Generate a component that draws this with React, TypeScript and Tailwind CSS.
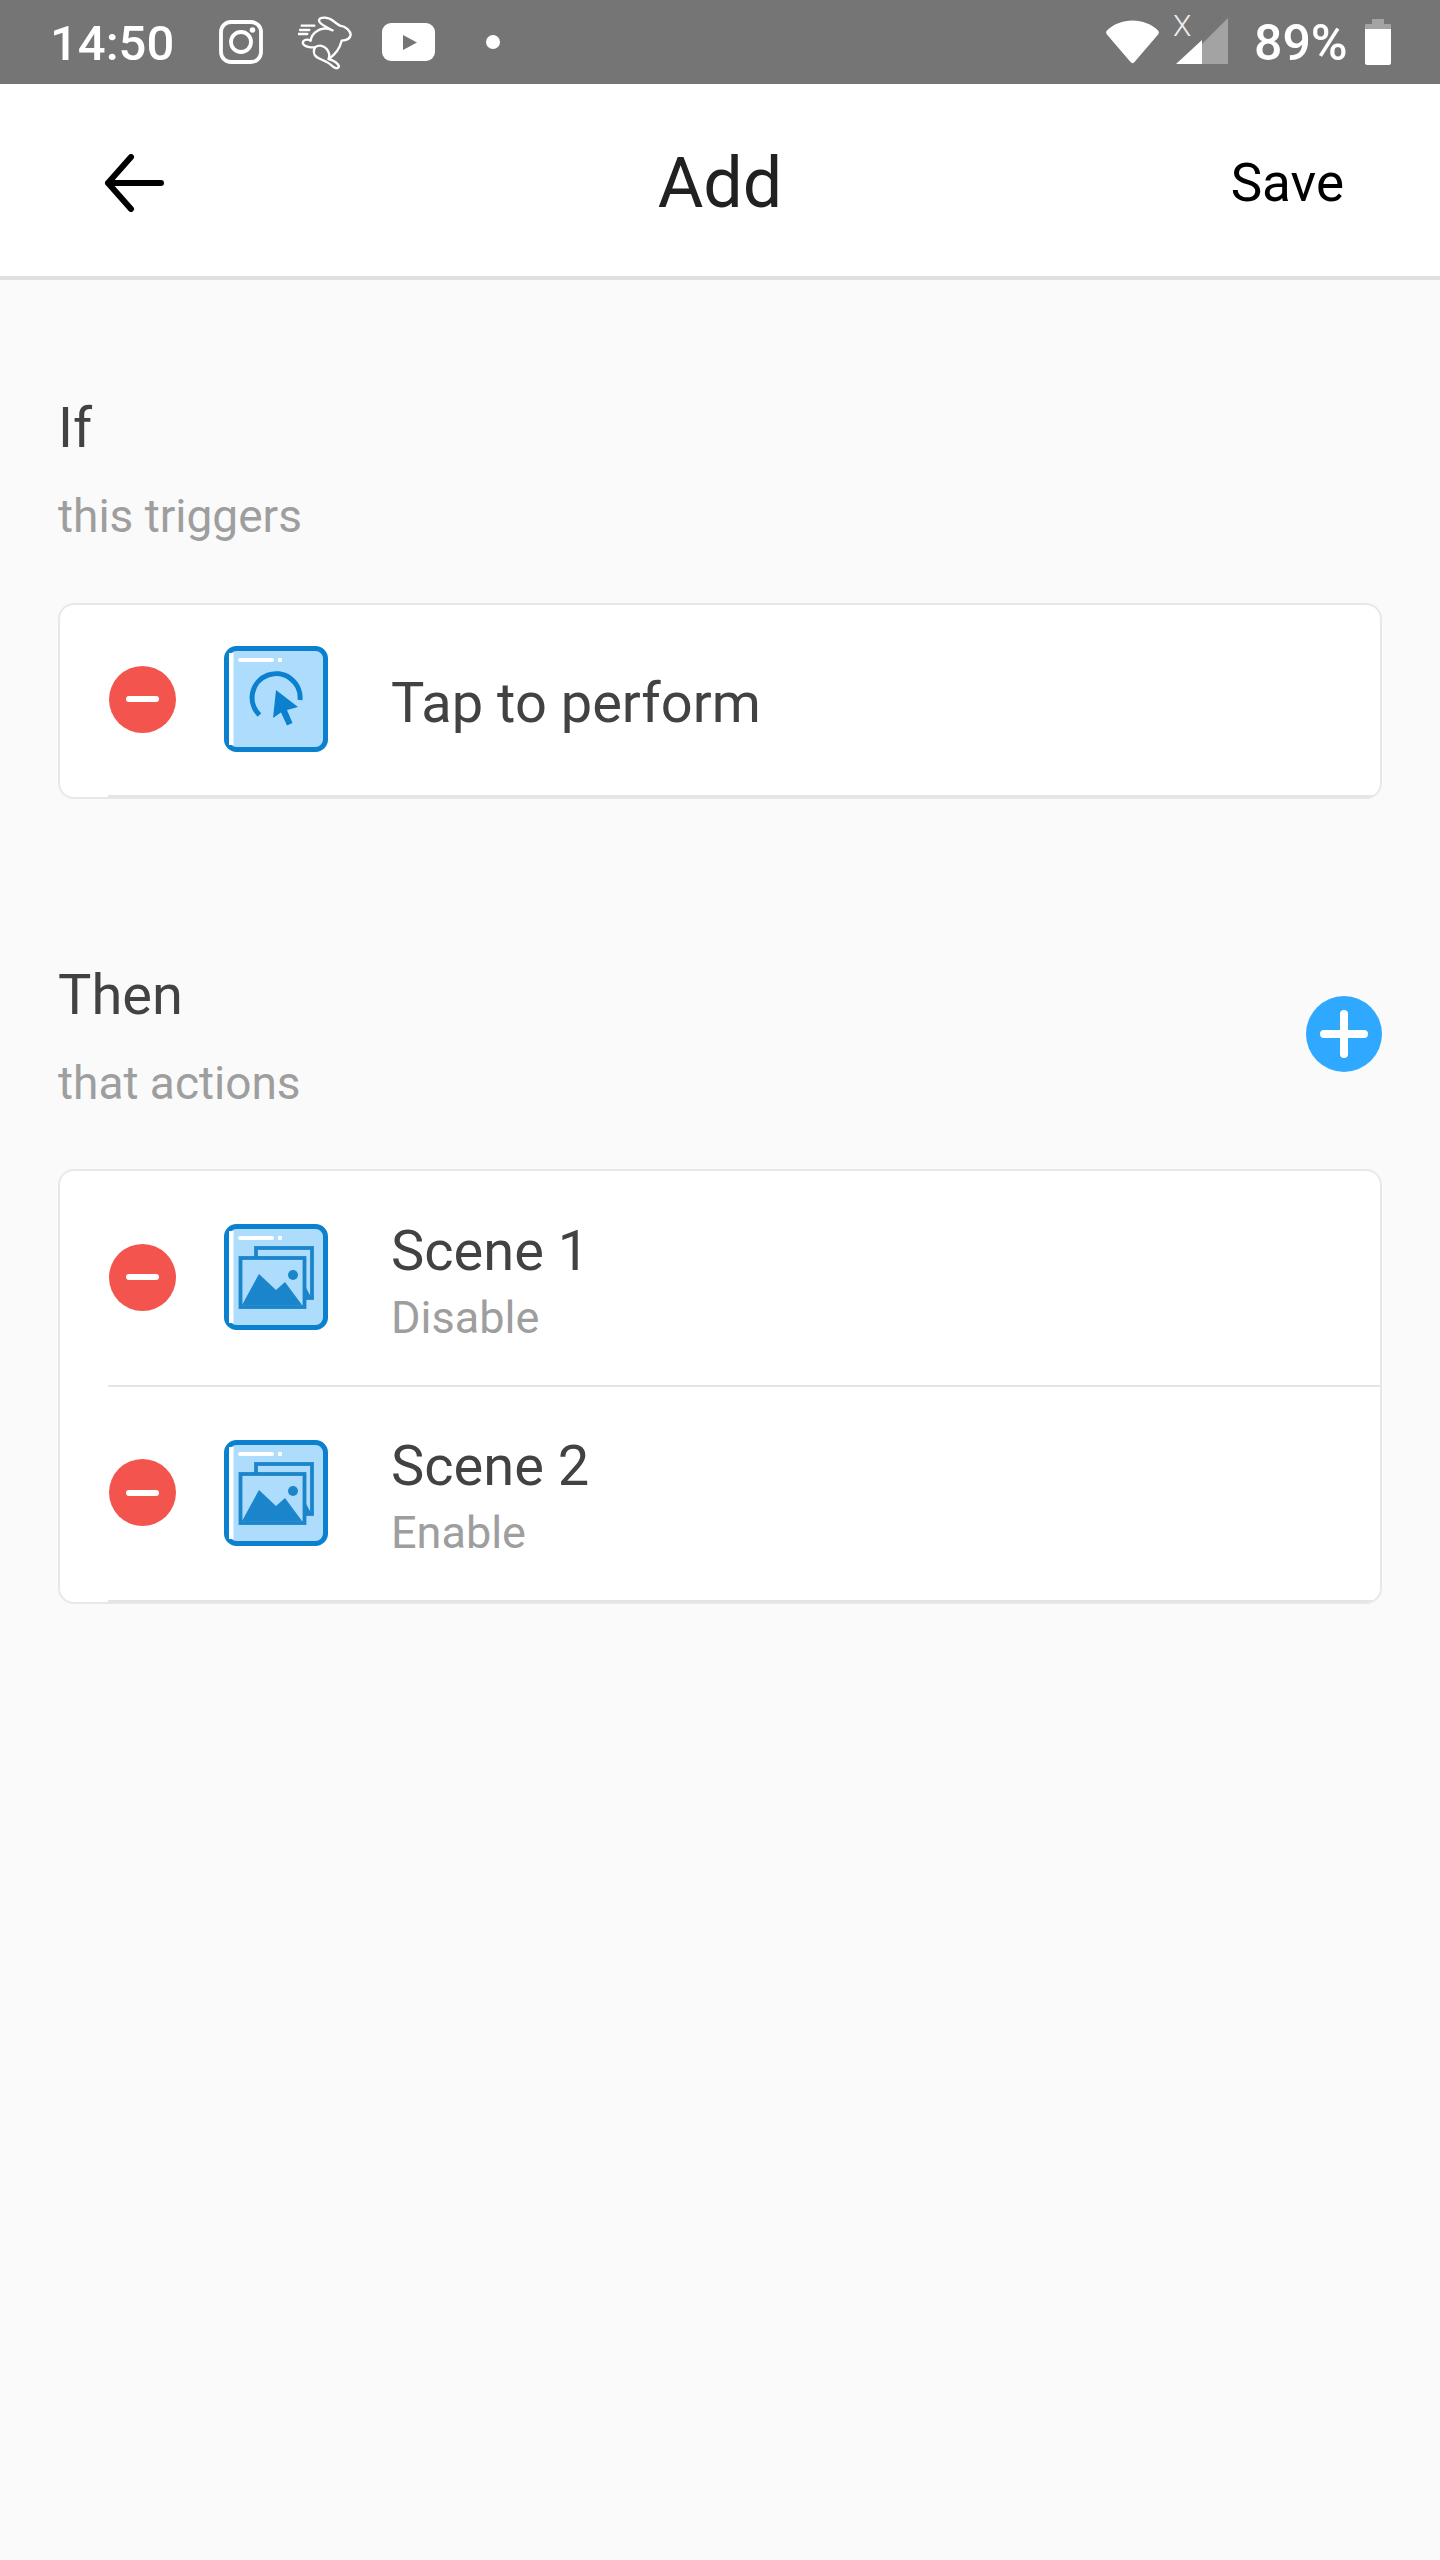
const CardIcon = ({ children }: { children: React.ReactNode }) => (
  <svg className="w-[104px] h-[106px] shrink-0" viewBox="0 0 104 106" fill="none">
    <rect x="2.5" y="2.5" width="99" height="101" rx="10" fill="#aedcfd" stroke="#0a80cf" strokeWidth="5" />
    <rect x="5" y="7" width="4.5" height="92" fill="#fff" />
    <rect x="14" y="12" width="36" height="4" rx="2" fill="#fff" />
    <rect x="54" y="12" width="4" height="4" rx="1" fill="#fff" />
    {children}
  </svg>
);

const TapGlyph = () => (
  <>
    <path d="M35.5 69A24 24 0 1 1 76 54" stroke="#0a80cf" strokeWidth="5" />
    <path d="M52 44L74 61L63 64L68.5 77L63 79.5L57 66.5L49 72Z" fill="#0a80cf" />
  </>
);

const ImagesGlyph = () => (
  <>
    <rect x="32" y="24" width="56" height="50" stroke="#1a85cb" strokeWidth="3.8" />
    <path d="M80 60L87 73H80Z" fill="#1a85cb" />
    <rect x="16.5" y="34" width="64" height="49" fill="#aedcfd" stroke="#1a85cb" strokeWidth="3.8" />
    <path d="M18 81L35 50L52 66L61 58L78 81Z" fill="#1a85cb" strokeLinejoin="round" />
    <circle cx="69" cy="51" r="5" fill="#1a85cb" />
  </>
);

const Row = ({ icon, title, sub, height }: { icon: React.ReactNode; title: string; sub?: string; height: string }) => (
  <div className={`ml-[48px] pl-[1px] pb-[2px] flex items-center border-b-2 border-[#e4e4e4] ${height}`}>
    <div className="w-[67px] h-[67px] rounded-full bg-[#f4544e] flex items-center justify-center shrink-0">
      <div className="w-[33px] h-[6px] rounded-full bg-white" />
    </div>
    <div className="ml-[48px]">
      <CardIcon>{icon}</CardIcon>
    </div>
    <div className="ml-[63px] pt-[8px]">
      <div className="text-[56px] leading-[64px] text-[#424242]">{title}</div>
      {sub && <div className="text-[45px] leading-[52px] text-[#9e9e9e] mt-[9px]">{sub}</div>}
    </div>
  </div>
);

export default function App() {
  return (
    <div className="w-[1440px] h-[2560px] bg-[#fafafa] font-['Roboto',sans-serif] overflow-hidden">
      <div className="h-[84px] bg-[#757575] flex items-center pl-[50px] text-white">
        <span className="text-[49px] leading-none font-medium w-[169px] mt-[2px]">14:50</span>
        <svg className="w-[44px] h-[44px] shrink-0" viewBox="0 0 44 44" fill="none" stroke="#fff">
          <rect x="2" y="2" width="40" height="40" rx="10" strokeWidth="3.8" />
          <circle cx="22" cy="22" r="10" strokeWidth="3.8" />
          <circle cx="33.5" cy="10" r="2.8" fill="#fff" stroke="none" />
        </svg>
        <svg className="w-[54px] h-[55px] shrink-0 ml-[35px]" viewBox="294 40 162 165" fill="none" stroke="#fff" strokeWidth="7" strokeLinecap="round" strokeLinejoin="round">
          <path d="M305 72H343M300 85H328M295 97H322" />
          <path d="M398 86C382 78 358 68 357 57C358 45 384 45 400 58C408 64 414 69 420 72C438 74 452 88 452 100C450 112 438 116 425 117C420 138 406 158 386 172C402 176 416 186 417 195C414 203 402 200 394 191C382 178 364 176 350 166C340 158 340 146 345 137C334 138 314 136 309 126C306 116 320 110 332 117C334 98 352 82 374 80C382 80 390 82 398 86Z" />
          <path d="M345 137C358 128 372 132 380 142C388 152 390 162 386 172" />
        </svg>
        <svg className="w-[53px] h-[38px] shrink-0 ml-[30px]" viewBox="0 0 53 38">
          <rect width="53" height="38" rx="9" fill="#fff" />
          <path d="M21 12V27L35 19.5Z" fill="#757575" />
        </svg>
        <div className="w-[14px] h-[14px] rounded-full bg-white ml-[51px] shrink-0" />
        <svg className="w-[53px] h-[44px] shrink-0 ml-[606px]" viewBox="0 0 53 44">
          <path d="M0.5 11C7 4 17 0.5 26.5 0.5C36 0.5 46 4 52.5 11C53 12 53 13 52.5 14L28.5 42C27.5 43.5 25.5 43.5 24.5 42L0.5 14C0 13 0 12 0.5 11Z" fill="#fff" />
        </svg>
        <div className="relative w-[55px] h-[50px] ml-[14px] shrink-0 self-start mt-[16px]">
          <svg className="w-[55px] h-[50px]" viewBox="0 0 55 50">
            <path d="M55 2V48H29V28Z" fill="#a3a3a3" />
            <path d="M3 48L29 24V48Z" fill="#fff" />
          </svg>
          <span className="absolute left-0 top-[-5px] text-[30px] leading-[30px] font-light text-[#eeeeee]">X</span>
        </div>
        <span className="text-[50px] leading-none font-medium ml-[26px] mt-[2px]">89%</span>
        <svg className="w-[26px] h-[46px] shrink-0 ml-[17px]" viewBox="0 0 26 46">
          <path d="M7 0H19V5H25C25.6 5 26 5.4 26 6V10H0V6C0 5.4 0.4 5 1 5H7Z" fill="#a3a3a3" />
          <path d="M0 10H26V44C26 45 25 46 24 46H2C1 46 0 45 0 44Z" fill="#fff" />
        </svg>
      </div>

      <header className="h-[196px] bg-white border-b-4 border-[#e0e0e0] flex items-center justify-between relative pl-[103px] pr-[96px]">
        <svg className="w-[62px] h-[58px] mt-[6px]" viewBox="0 0 62 58" fill="none" stroke="#000" strokeWidth="6" strokeLinecap="round" strokeLinejoin="round">
          <path d="M58 29H5M28 3L5 29L28 55" />
        </svg>
        <span className="absolute left-0 right-0 top-[64px] text-center text-[70px] leading-none text-[#212121]">Add</span>
        <span className="text-[53px] leading-none text-black mt-[6px]">Save</span>
      </header>

      <main className="px-[58px]">
        <div className="pt-[116px]">
          <div className="text-[55px] leading-[64px] text-[#424242]">If</div>
          <div className="text-[46px] leading-[56px] text-[#9e9e9e] mt-[28px]">this triggers</div>
        </div>
        <div className="mt-[59px] bg-white border-2 border-[#e8e8e8] rounded-[16px] overflow-hidden">
          <Row icon={<TapGlyph />} title="Tap to perform" height="h-[192px]" />
        </div>

        <div className="mt-[164px] flex justify-between items-start">
          <div>
            <div className="text-[56px] leading-[64px] text-[#424242]">Then</div>
            <div className="text-[46px] leading-[56px] text-[#9e9e9e] mt-[28px]">that actions</div>
          </div>
          <div className="w-[76px] h-[76px] rounded-full bg-[#2fa9ff] flex items-center justify-center mt-[33px]">
            <svg className="w-[48px] h-[48px]" viewBox="0 0 48 48" stroke="#fff" strokeWidth="8" strokeLinecap="round">
              <path d="M24 4V44M4 24H44" />
            </svg>
          </div>
        </div>
        <div className="mt-[58px] bg-white border-2 border-[#e8e8e8] rounded-[16px] overflow-hidden">
          <Row icon={<ImagesGlyph />} title="Scene 1" sub="Disable" height="h-[216px]" />
          <Row icon={<ImagesGlyph />} title="Scene 2" sub="Enable" height="h-[215px]" />
        </div>
      </main>
    </div>
  );
}
